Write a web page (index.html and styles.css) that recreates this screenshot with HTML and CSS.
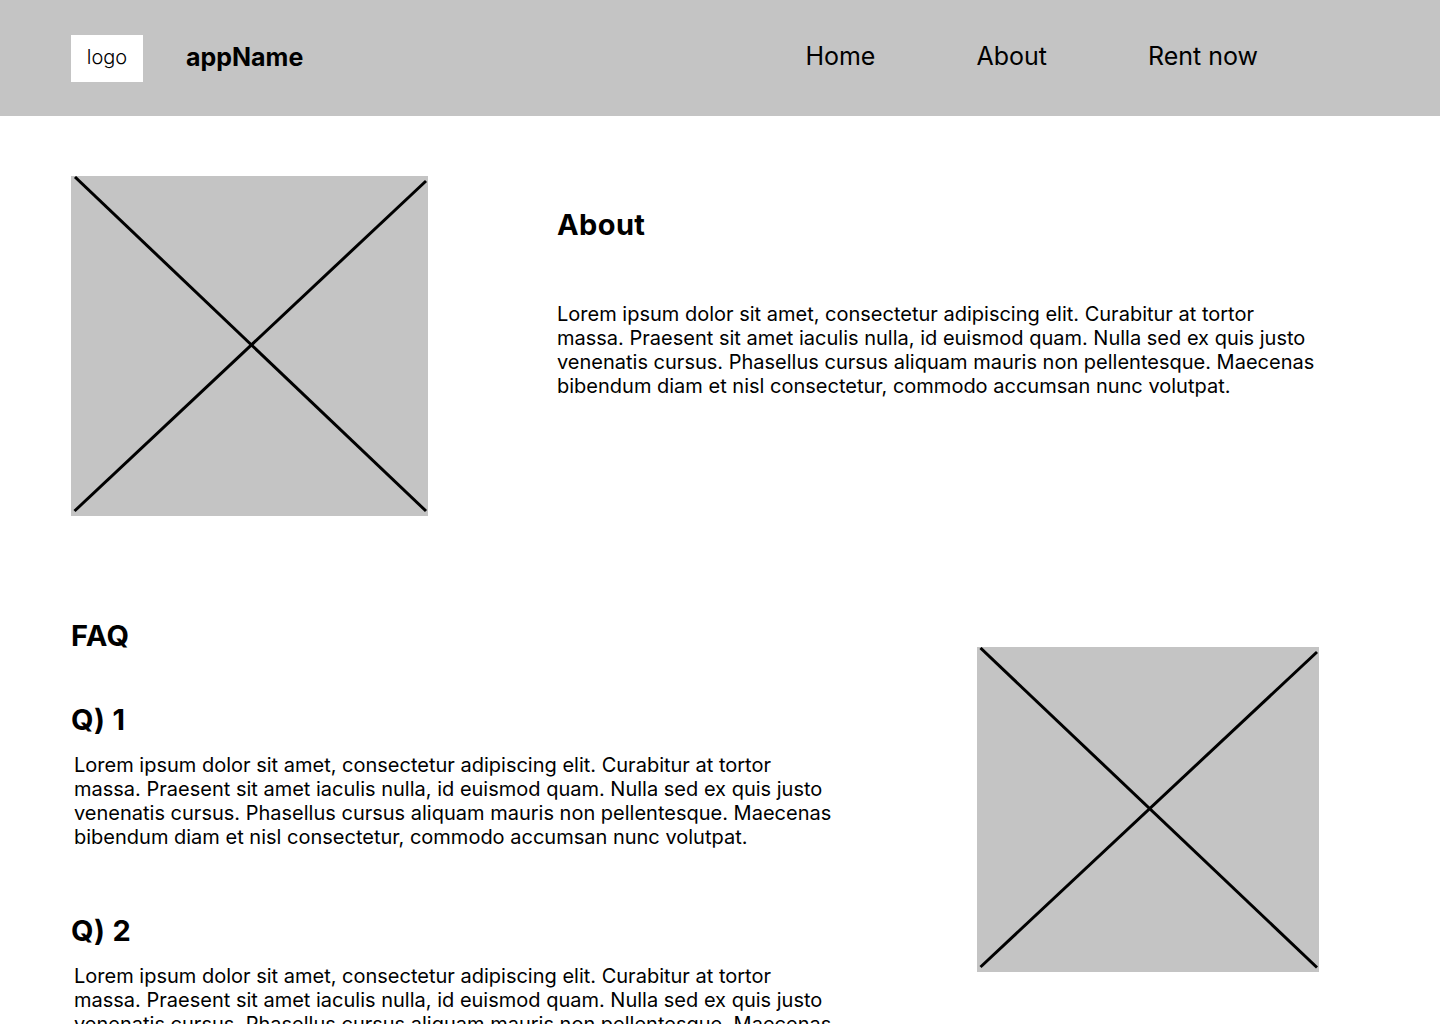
FILE: index.html
```html
<!DOCTYPE html>
<html lang="en">
<head>
<meta charset="utf-8">
<title>appName</title>
<link rel="stylesheet" href="styles.css">
</head>
<body>
<header class="topbar">
  <div class="brand">
    <div class="logo">logo</div>
    <span class="app-name">appName</span>
  </div>
  <nav class="nav">
    <a href="#" class="nav-link">Home</a>
    <a href="#" class="nav-link">About</a>
    <a href="#" class="nav-link">Rent now</a>
  </nav>
</header>

<main class="page">
  <section class="about">
    <svg class="placeholder ph-about" viewBox="0 0 357 340" preserveAspectRatio="none" aria-hidden="true">
      <rect width="357" height="340" fill="#c4c4c4"/>
      <line x1="4" y1="1" x2="355" y2="335" stroke="#000" stroke-width="3"/>
      <line x1="355" y1="5" x2="3.5" y2="335" stroke="#000" stroke-width="3"/>
    </svg>
    <div class="about-text">
      <h2 class="heading">About</h2>
      <p class="body-text">Lorem ipsum dolor sit amet, consectetur adipiscing elit. Curabitur at tortor massa. Praesent sit amet iaculis nulla, id euismod quam. Nulla sed ex quis justo venenatis cursus. Phasellus cursus aliquam mauris non pellentesque. Maecenas bibendum diam et nisl consectetur, commodo accumsan nunc volutpat.</p>
    </div>
  </section>

  <section class="faq">
    <div class="faq-list">
      <h2 class="heading">FAQ</h2>
      <div class="faq-item">
        <h3 class="heading">Q) 1</h3>
        <p class="body-text faq-answer">Lorem ipsum dolor sit amet, consectetur adipiscing elit. Curabitur at tortor massa. Praesent sit amet iaculis nulla, id euismod quam. Nulla sed ex quis justo venenatis cursus. Phasellus cursus aliquam mauris non pellentesque. Maecenas bibendum diam et nisl consectetur, commodo accumsan nunc volutpat.</p>
      </div>
      <div class="faq-item">
        <h3 class="heading">Q) 2</h3>
        <p class="body-text faq-answer">Lorem ipsum dolor sit amet, consectetur adipiscing elit. Curabitur at tortor massa. Praesent sit amet iaculis nulla, id euismod quam. Nulla sed ex quis justo venenatis cursus. Phasellus cursus aliquam mauris non pellentesque. Maecenas bibendum diam et nisl consectetur, commodo accumsan nunc volutpat.</p>
      </div>
    </div>
    <svg class="placeholder ph-faq" viewBox="0 0 342 325" preserveAspectRatio="none" aria-hidden="true">
      <rect width="342" height="325" fill="#c4c4c4"/>
      <line x1="3.5" y1="1" x2="340" y2="320.5" stroke="#000" stroke-width="3"/>
      <line x1="340" y1="5" x2="3.5" y2="320" stroke="#000" stroke-width="3"/>
    </svg>
  </section>
</main>
</body>
</html>
```

FILE: styles.css
```css
* {
  box-sizing: border-box;
}

html, body {
  margin: 0;
  padding: 0;
  background: #ffffff;
  color: #000000;
  font-family: Inter, "Noto Sans", "Liberation Sans", sans-serif;
}

.topbar {
  height: 116px;
  background: #c4c4c4;
  display: flex;
  align-items: center;
  justify-content: space-between;
  padding: 0 182px 0 71px;
}

.brand {
  display: flex;
  align-items: center;
  gap: 43px;
}

.logo {
  width: 72px;
  height: 47px;
  background: #ffffff;
  display: flex;
  align-items: center;
  justify-content: center;
  padding-bottom: 3px;
  font-size: 20px;
  font-weight: 300;
}

.app-name {
  font-size: 25px;
  font-weight: 700;
  margin-bottom: 3px;
}

.nav {
  display: flex;
  align-items: center;
  gap: 101px;
  margin-bottom: 4px;
}

.nav-link {
  font-size: 25px;
  font-weight: 400;
  color: #000000;
  text-decoration: none;
}

.page {
  padding: 60px 0 0 71px;
}

.placeholder {
  display: block;
  flex: none;
}

.ph-about {
  width: 357px;
  height: 340px;
}

.ph-faq {
  width: 342px;
  height: 325px;
  margin-top: 29px;
}

.about {
  display: flex;
  align-items: flex-start;
}

.about-text {
  margin-left: 129px;
  padding-top: 31px;
  width: 760px;
}

.heading {
  margin: 0;
  font-size: 29px;
  font-weight: 700;
  line-height: 35px;
  letter-spacing: 0.4px;
}

.body-text {
  margin: 0;
  font-size: 20px;
  font-weight: 400;
  line-height: 24px;
}

.about-text .body-text {
  margin-top: 60px;
}

.faq {
  display: flex;
  align-items: flex-start;
  margin-top: 102px;
}

.faq-list {
  width: 906px;
  flex: none;
  display: flex;
  flex-direction: column;
  gap: 49px;
}

.faq-item + .faq-item {
  margin-top: 15px;
}

.faq-answer {
  margin-top: 16px;
  padding-left: 3px;
  width: 763px;
}
```
